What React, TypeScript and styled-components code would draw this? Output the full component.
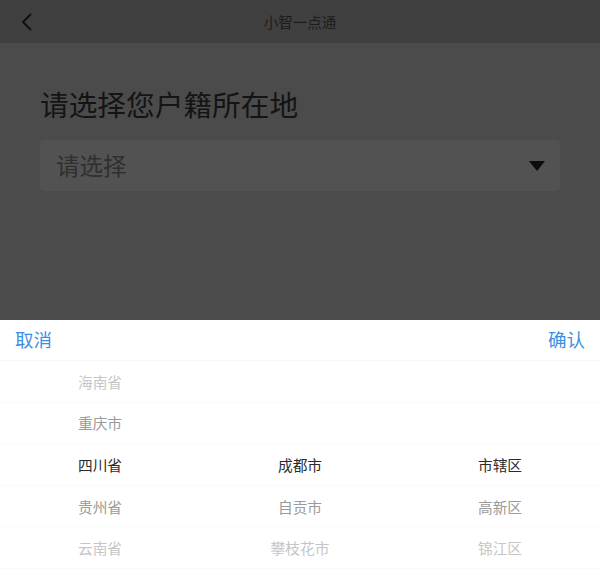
import React from "react";
import styled, { createGlobalStyle } from "styled-components";

const GlobalStyle = createGlobalStyle`
  html, body {
    margin: 0;
    padding: 0;
    height: 100%;
    background: #4b4b4b;
  }
  body {
    font-family: "Noto Sans CJK SC", "Noto Sans", sans-serif;
  }
  #root {
    height: 100%;
  }
`;

const Screen = styled.div`
  width: 600px;
  height: 569px;
  display: flex;
  flex-direction: column;
  overflow: hidden;
`;

const Page = styled.div`
  flex: 1;
  display: flex;
  flex-direction: column;
  background: #4b4b4b;
`;

const NavBar = styled.header`
  height: 43px;
  flex-shrink: 0;
  background: #404040;
  display: grid;
  grid-template-columns: 60px 1fr 60px;
  align-items: center;
`;

const BackButton = styled.button`
  width: 60px;
  height: 43px;
  border: 0;
  padding: 0 0 0 21px;
  background: transparent;
  display: flex;
  align-items: center;
`;

const Title = styled.div`
  text-align: center;
  font-size: 14.5px;
  color: #1c1c1c;
  padding-bottom: 1px;
`;

const Content = styled.main`
  padding: 39px 40px 0 40px;
  display: flex;
  flex-direction: column;
  gap: 14px;
`;

const Question = styled.h1`
  margin: 0;
  font-size: 28.7px;
  font-weight: 400;
  line-height: 44px;
  color: #141414;
`;

const SelectBox = styled.div`
  height: 51px;
  border-radius: 4px;
  background: #525252;
  display: flex;
  align-items: center;
  justify-content: space-between;
  padding: 0 15px 0 16px;
`;

const Placeholder = styled.span`
  font-size: 23.5px;
  color: #2f2f2f;
  padding-bottom: 2px;
`;

const Sheet = styled.section`
  height: 249px;
  flex-shrink: 0;
  background: #ffffff;
  display: flex;
  flex-direction: column;
`;

const Toolbar = styled.div`
  height: 40px;
  display: flex;
  align-items: center;
  justify-content: space-between;
  padding: 0 15px;
  border-bottom: 1px solid #f6f6f6;
`;

const ToolButton = styled.button`
  border: 0;
  padding: 0;
  background: transparent;
  font-family: inherit;
  font-size: 18.5px;
  color: #3d8fe0;
  line-height: 24px;
  padding-bottom: 2px;
`;

const Row = styled.div`
  height: 41.6px;
  display: grid;
  grid-template-columns: repeat(3, 1fr);
  align-items: center;
  border-bottom: 1px solid #fafafa;
  box-sizing: border-box;
`;

const Cell = styled.div<{ $level: number }>`
  text-align: center;
  font-size: 14.7px;
  color: ${(p) =>
    p.$level === 0 ? "#2a2a2a" : p.$level === 1 ? "#9a9a9a" : "#c6c6c6"};
`;

const rows: [string, string, string][] = [
  ["海南省", "", ""],
  ["重庆市", "", ""],
  ["四川省", "成都市", "市辖区"],
  ["贵州省", "自贡市", "高新区"],
  ["云南省", "攀枝花市", "锦江区"],
];

const App = () => {
  return (
    <>
      <GlobalStyle />
      <Screen>
        <Page>
          <NavBar>
            <BackButton aria-label="返回">
              <svg width="11" height="18" viewBox="0 0 11 18">
                <path
                  d="M9.5 1.5 L2 9 L9.5 16.5"
                  fill="none"
                  stroke="#111"
                  strokeWidth="2"
                  strokeLinecap="round"
                  strokeLinejoin="round"
                />
              </svg>
            </BackButton>
            <Title>小智一点通</Title>
            <span />
          </NavBar>
          <Content>
            <Question>请选择您户籍所在地</Question>
            <SelectBox>
              <Placeholder>请选择</Placeholder>
              <svg width="16" height="10" viewBox="0 0 16 10">
                <path d="M0 0 H16 L8 10 Z" fill="#0c0c0c" />
              </svg>
            </SelectBox>
          </Content>
        </Page>
        <Sheet>
          <Toolbar>
            <ToolButton>取消</ToolButton>
            <ToolButton>确认</ToolButton>
          </Toolbar>
          {rows.map((row, i) => (
            <Row key={i}>
              {row.map((text, j) => (
                <Cell key={j} $level={Math.abs(i - 2)}>
                  {text}
                </Cell>
              ))}
            </Row>
          ))}
        </Sheet>
      </Screen>
    </>
  );
};

export default App;
